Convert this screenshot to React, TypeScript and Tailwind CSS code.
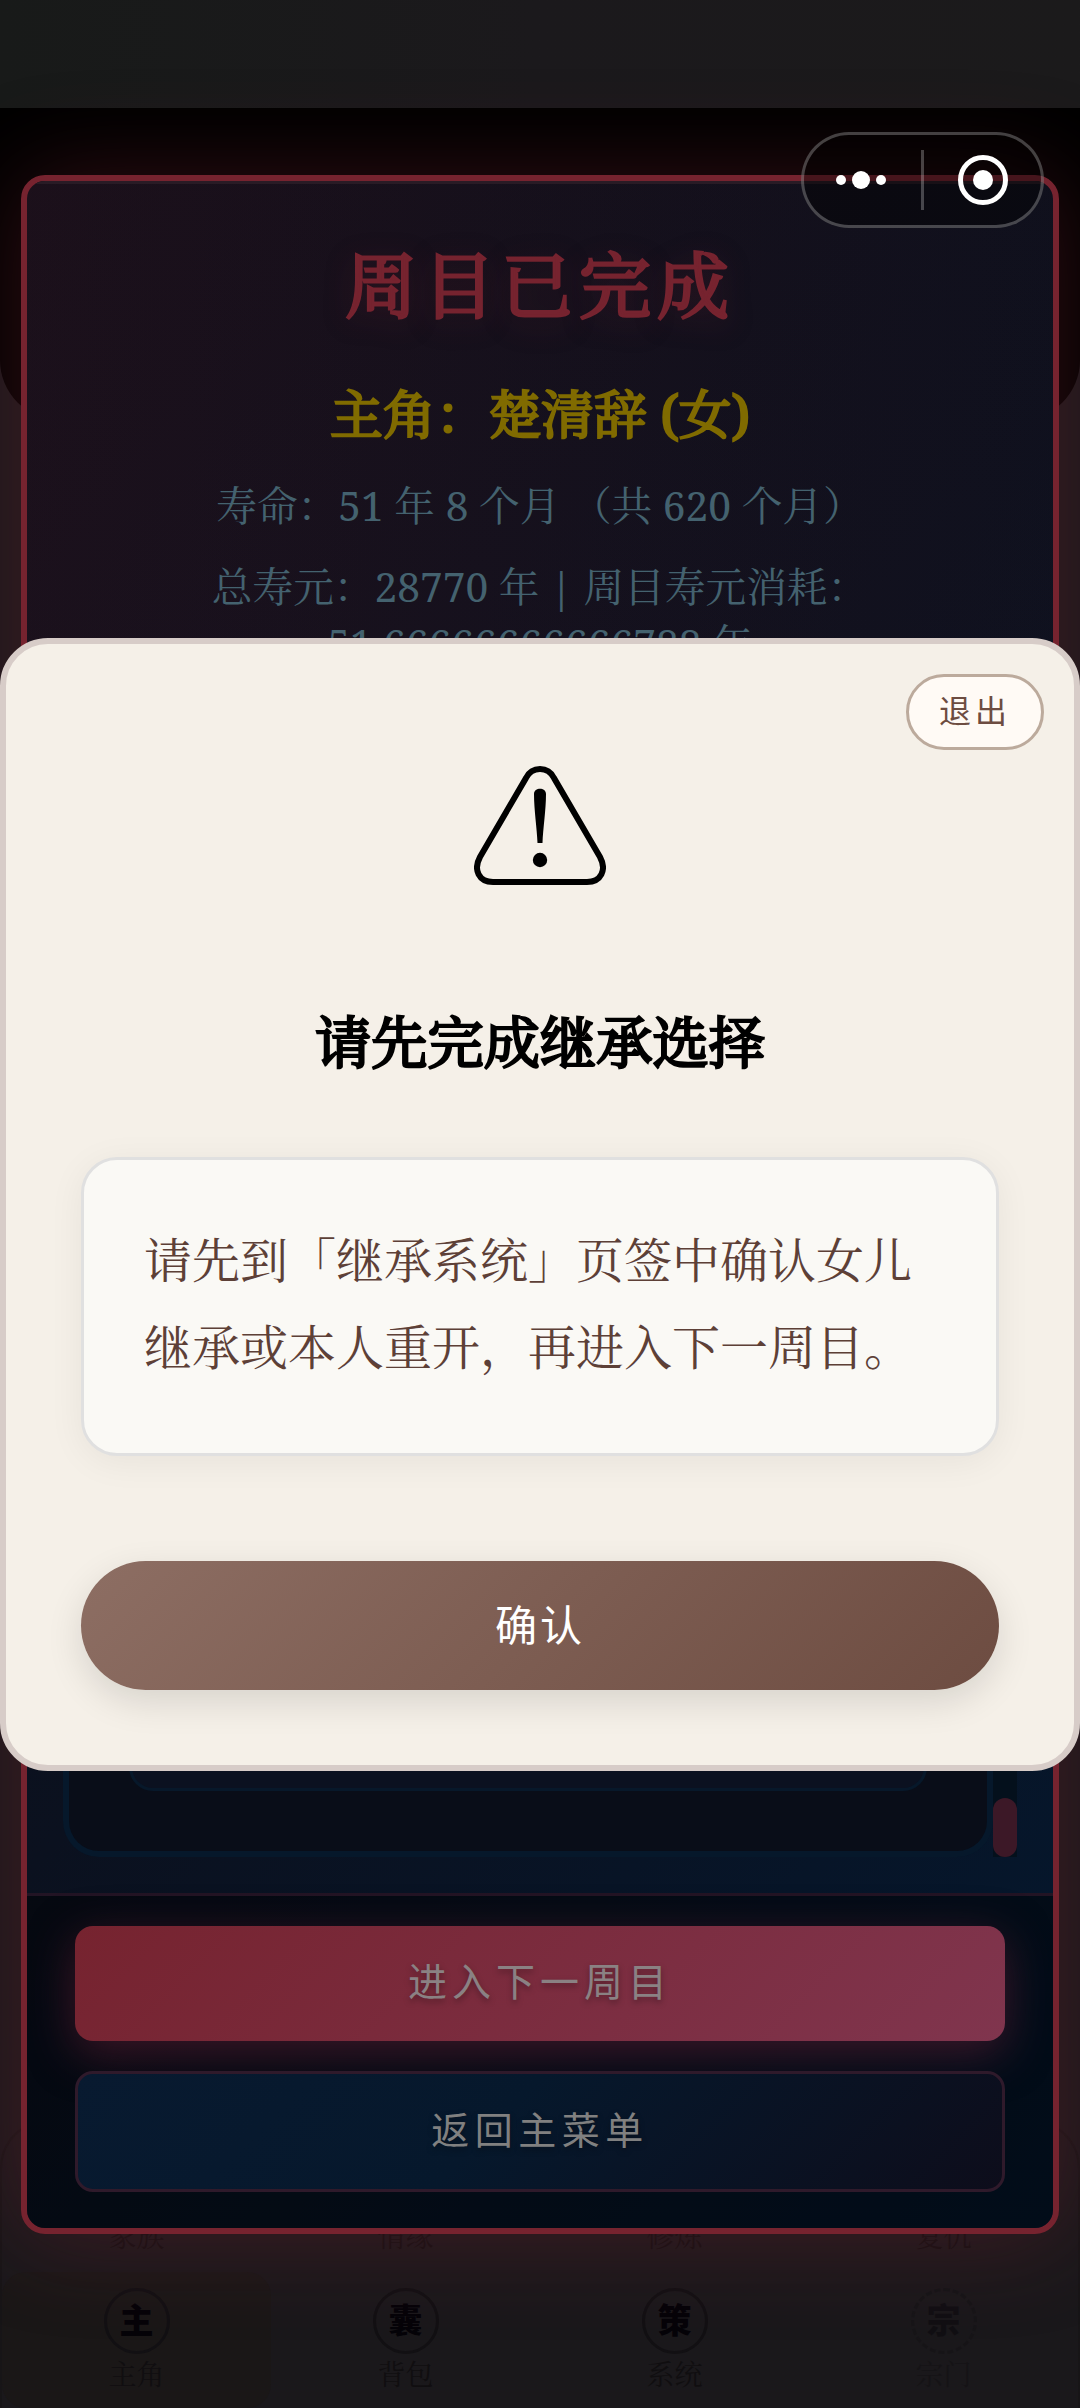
const topNav = ["家族", "情缘", "修炼", "复仇"]

const bottomNav = [
  { glyph: "主", label: "主角", active: true },
  { glyph: "囊", label: "背包" },
  { glyph: "策", label: "系统" },
  { glyph: "宗", label: "宗门", locked: true },
]

function PageBackdrop() {
  return (
    <div className="[grid-area:1/1] flex flex-col bg-[#1a181b]">
      <div className="h-[108px] bg-gradient-to-r from-[#181a19] via-[#1b191c] to-[#1b1a1b]" />
      <div className="h-[312px] rounded-b-[60px] bg-black" />
      <div className="flex-1" />
      <div className="h-[288px] rounded-t-[48px] border-x-2 border-t-2 border-[#171517] flex flex-col justify-end">
        <div className="grid grid-cols-4 h-[40px] items-center text-center text-[28px] leading-none text-[#110f11]">
          {topNav.map((label) => (
            <span key={label}>{label}</span>
          ))}
        </div>
        <div className="grid grid-cols-4 mt-[16px]">
          {bottomNav.map((item) => (
            <div
              key={item.label}
              className={[
                "h-[136px] pt-[16px] flex flex-col items-center rounded-3xl",
                item.active ? "bg-[#1a1717]" : "",
                item.locked ? "opacity-40" : "",
              ].join(" ")}
            >
              <div
                className={[
                  "h-[66px] w-[66px] rounded-full border-[3px] border-[#121013] grid place-items-center font-['Noto_Sans_CJK_SC',sans-serif] text-[34px] leading-none font-black text-[#050308]",
                  item.locked ? "border-dashed" : "",
                ].join(" ")}
              >
                <span className="-mt-[4px]">{item.glyph}</span>
              </div>
              <span className="mt-[6px] text-[28px] leading-[28px] text-[#100e10]">{item.label}</span>
            </div>
          ))}
        </div>
      </div>
    </div>
  )
}

function CompletePanel() {
  return (
    <div className="[grid-area:1/1] mt-[175px] mx-[21px] h-[2059px] self-start rounded-[24px] border-[6px] border-[#76232f] overflow-hidden flex flex-col bg-[linear-gradient(135deg,#0d0d17_0%,#0b111f_55%,#04182f_100%)] shadow-[0_0_96px_rgba(116,34,48,0.42)]">
      {/* header */}
      <div className="h-[900px] pt-[52px] border-t-[3px] border-[#291b25] flex flex-col items-center text-center bg-gradient-to-r from-[#742230]/14 to-[#742230]/4">
        <h1 className="text-[72px] leading-[96px] tracking-[6px] font-normal [-webkit-text-stroke:3px_#76232f] text-[#76232f] [text-shadow:0_6px_30px_rgba(118,35,47,0.4)]">
          周目已完成
        </h1>
        <h2 className="mt-[46px] text-[52.8px] leading-[72px] font-normal [-webkit-text-stroke:2.4px_#806b00] text-[#806b00] whitespace-nowrap">
          主角：楚清辞 (女)
        </h2>
        <p className="mt-[27px] text-[40.7px] leading-[57px] text-[#44626f] whitespace-nowrap">
          寿命：51 年 8 个月 （共 620 个月）
        </p>
        <p className="mt-[24px] text-[40.7px] leading-[57px] text-[#44626f] whitespace-nowrap">
          总寿元：28770 年 | 周目寿元消耗：
          <br />
          51.66666666666788 年
        </p>
      </div>

      {/* history list */}
      <div className="flex-1 min-h-0 pl-[36px] pr-[36px] pb-[36px] flex">
        <div className="w-[930px] border-x-[6px] border-b-[6px] border-[#06182b] rounded-b-[36px] bg-[#090d18] px-[60px] pb-[60px]">
          <div className="h-full rounded-b-[24px] border-x-[3px] border-b-[3px] border-[#07182a] bg-[#0b1120]" />
        </div>
        <div className="w-[24px] bg-[#04101c] flex flex-col justify-end">
          <div className="h-[59px] rounded-full bg-[#3c1827]" />
        </div>
      </div>

      {/* actions */}
      <div className="h-[335px] border-t-[3px] border-[#221424] bg-black/45 px-[48px] pt-[30px] flex flex-col gap-[30px] font-['Noto_Sans_CJK_SC',sans-serif]">
        <button className="h-[115px] pb-[8px] shrink-0 rounded-[18px] bg-[linear-gradient(135deg,#76232f,#80354e)] shadow-[0_12px_45px_rgba(116,34,58,0.5)] text-[39px] tracking-[5px] text-[#8a8183] [text-shadow:0_3px_6px_rgba(0,0,0,0.35)]">
          进入下一周目
        </button>
        <button className="h-[121px] pb-[8px] shrink-0 rounded-[18px] border-[3px] border-[#2f1a2b] bg-[linear-gradient(135deg,#081a30,#06182c_45%,#0d0d1b)] text-[38px] tracking-[5.5px] text-[#808080] [text-shadow:0_3px_6px_rgba(0,0,0,0.35)]">
          返回主菜单
        </button>
      </div>
    </div>
  )
}

function WarningIcon() {
  return (
    <svg width="132" height="122" viewBox="0 0 132 122" fill="none">
      <path
        d="M52 14 C58 2 74 2 80 14 L126 93 C133 106 127 118 113 118 H19 C5 118 -1 106 6 93 Z"
        stroke="#000"
        strokeWidth="6"
      />
      <path d="M60 30 C60 23 72 23 72 30 C72 46 69 65 68.500 79 H63.500 C63 65 60 46 60 30 Z" fill="#000" />
      <circle cx="66" cy="96" r="7.200" fill="#000" />
    </svg>
  )
}

function ConfirmDialog() {
  return (
    <div className="[grid-area:1/1] relative mt-[638px] h-[1133px] self-start rounded-[48px] border-[6px] border-[#d7ccc8] bg-[#f5f0e8] px-[75px] pt-[120px] flex flex-col items-center">
      <button className="absolute right-[30px] top-[30px] w-[138px] h-[76px] pb-[6px] rounded-full border-[3px] border-[#bcaa9c] bg-[#fffaf5] font-['Noto_Sans_CJK_SC',sans-serif] text-[32px] tracking-[4px] text-[#6d4c41]">
        退出
      </button>
      <WarningIcon />
      <h3 className="mt-[115px] text-[56.25px] leading-[80px] font-normal [-webkit-text-stroke:2.6px_#000] text-black">
        请先完成继承选择
      </h3>
      <div className="mt-[76px] w-full h-[299px] rounded-[36px] border-[3px] border-[#e0e0e0] bg-[#faf9f5] px-[60px] pt-[56px] shadow-[0_6px_36px_rgba(0,0,0,0.06)] text-[48px] leading-[87px] text-[#5d4037]">
        请先到「继承系统」页签中确认女儿继承或本人重开，再进入下一周目。
      </div>
      <button className="mt-[105px] w-full h-[129px] pb-[6px] rounded-full bg-[linear-gradient(135deg,#8d6e63,#6d4c41)] shadow-[0_12px_36px_rgba(0,0,0,0.12)] font-['Noto_Sans_CJK_SC',sans-serif] text-[42px] tracking-[3px] text-white">
        确认
      </button>
    </div>
  )
}

function MiniProgramCapsule() {
  return (
    <div className="absolute left-[801px] top-[132px] w-[243px] h-[96px] rounded-full border-[3px] border-white/25 bg-black/40 flex items-center">
      <div className="w-[117px] pr-[3px] flex items-center justify-center gap-[6px]">
        <span className="h-[10px] w-[10px] rounded-full bg-white" />
        <span className="h-[18px] w-[18px] rounded-full bg-white" />
        <span className="h-[10px] w-[10px] rounded-full bg-white" />
      </div>
      <span className="h-[60px] w-[3px] bg-white/25" />
      <div className="flex-1 grid place-items-center">
        <span className="h-[50px] w-[50px] rounded-full border-[5px] border-white grid place-items-center">
          <span className="h-[20px] w-[20px] rounded-full bg-white" />
        </span>
      </div>
    </div>
  )
}

export default function App() {
  return (
    <div className="relative w-[1080px] h-[2408px] overflow-hidden grid grid-cols-[1080px] grid-rows-[2408px] font-['Noto_Serif','Noto_Serif_CJK_SC','Noto_Sans_CJK_SC',serif]">
      <PageBackdrop />
      <CompletePanel />
      <ConfirmDialog />
      <MiniProgramCapsule />
    </div>
  )
}
